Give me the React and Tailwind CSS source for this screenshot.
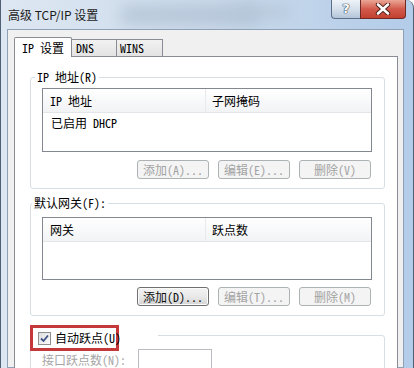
import React from 'react';

const mono = "font-['Noto_Sans_Mono_CJK_SC','Liberation_Mono','Noto_Sans_CJK_SC',monospace] text-[12px] leading-[16px]";

const Btn = ({ children, disabled }) => (
  <div
    className={
      disabled
        ? 'w-[72px] h-[19px] flex items-center justify-center rounded-[3px] border border-[#adb2b5] bg-[#f4f4f4] text-[#a3a3a3]'
        : 'w-[72px] h-[19px] flex items-center justify-center rounded-[3px] border border-[#707070] bg-linear-to-b from-[#f3f3f3] via-[#e9e9e9] to-[#d4d4d4] text-[#111] shadow-[inset_0_0_0_1px_#fbfbfb]'
    }
  >
    {children}
  </div>
);

const ListBox = ({ cols, rows, height }) => (
  <div className={`w-[330px] border border-[#828790] bg-white ${height}`}>
    <div className="flex h-[24px] items-center bg-linear-to-b from-white to-[#f2f3f5] border-b border-[#e3e5e8]">
      <div className="w-[163px] h-full flex items-center pl-[7px] border-r border-[#e8e9eb]">{cols[0]}</div>
      <div className="flex-1 h-full flex items-center pl-[6px]">{cols[1]}</div>
    </div>
    {rows.map((r) => (
      <div key={r} className="h-[20px] flex items-center pl-[8px]">{r}</div>
    ))}
  </div>
);

const Group = ({ label, legendClass, children, className }) => (
  <fieldset className={`ml-[15px] w-[355px] border border-[#d5dfe5] rounded-[3px] px-[11px] ${className}`}>
    <legend className={`px-[2px] ${legendClass}`}>{label}</legend>
    {children}
  </fieldset>
);

export default function App() {
  return (
    <div className="relative w-[414px] h-[368px] overflow-hidden bg-white">
      <div className="relative w-[414px] h-[368px] border-l border-r border-[#4f5f74] rounded-tr-[8px] bg-linear-to-r from-[#dde7f2] via-[#ccdbeb] to-[#b3cce9]">
        <div className="absolute left-[120px] top-[6px] w-[140px] h-[18px] bg-[#a4b6ca] blur-[8px] opacity-60" />
        <div className="absolute left-[230px] top-[4px] w-[60px] h-[16px] bg-[#b7c7d8] blur-[6px] opacity-60" />

        <div className="relative h-[29px] flex items-center pl-[7px] font-['Noto_Sans_CJK_SC',sans-serif] text-[12px] text-[#1b1b1b]">
          高级 TCP/IP 设置
        </div>

        <div className="absolute top-0 left-[330px] flex">
          <div className="w-[29px] h-[19px] flex items-center justify-center border border-t-0 border-r-0 border-[#5d6f88] rounded-bl-[4px] bg-linear-to-b from-[#eef3f8] via-[#d6e0eb] to-[#b4c5d9] font-['DejaVu_Sans',sans-serif] font-bold text-[13px] text-white [text-shadow:0_0_1px_#2c3a4e,0_0_1px_#2c3a4e,0_0_1px_#2c3a4e]">
            ?
          </div>
          <div className="w-[46px] h-[19px] flex items-center justify-center border border-t-0 border-[#6e2b25] rounded-br-[4px] bg-linear-to-b from-[#e9a596] via-[#d25a4c] to-[#c3402f]">
            <svg width="16" height="12" viewBox="0 0 16 12">
              <path d="M3 1.5 L13 10.5 M13 1.5 L3 10.5" stroke="#4a1d18" strokeWidth="4.4" strokeLinecap="round" />
              <path d="M3 1.5 L13 10.5 M13 1.5 L3 10.5" stroke="#ffffff" strokeWidth="2.6" strokeLinecap="round" />
            </svg>
          </div>
        </div>

        <div className={`relative ml-[6px] w-[397px] h-[339px] border border-[#8ea1b7] bg-[#f0f0f0] text-black ${mono}`}>
          <div className="pl-[6px] pt-[7px]">
            <div className="flex items-end h-[19px]">
              <div className="relative z-10 -mb-px w-[58px] h-[20px] flex items-center pl-[7px] bg-white border border-b-0 border-[#898c95] rounded-t-[2px]">
                IP 设置
              </div>
              <div className="w-[45px] h-[17px] flex items-center pl-[4px] border-t border-r border-[#898c95] bg-linear-to-b from-[#f2f2f2] to-[#e3e3e3]">
                DNS
              </div>
              <div className="w-[46px] h-[17px] flex items-center pl-[3px] border-t border-r border-[#898c95] bg-linear-to-b from-[#f2f2f2] to-[#e3e3e3]">
                WINS
              </div>
            </div>

            <div className="w-[384px] h-[320px] bg-white border border-[#898c95]">
              <Group label="IP 地址(R)" legendClass="-ml-[7px]" className="mt-[12px] pb-[9px]">
                <div className="mt-[3px]">
                  <ListBox cols={['IP 地址', '子网掩码']} rows={['已启用 DHCP']} height="h-[64px]" />
                </div>
                <div className="mt-[8px] flex justify-end gap-[9px] pr-[2px]">
                  <Btn disabled>添加(A)...</Btn>
                  <Btn disabled>编辑(E)...</Btn>
                  <Btn disabled>删除(V)</Btn>
                </div>
              </Group>

              <Group label="默认网关(F):" legendClass="-ml-[10px]" className="mt-[6px] pb-[9px]">
                <div className="mt-[6px]">
                  <ListBox cols={['网关', '跃点数']} rows={[]} height="h-[63px]" />
                </div>
                <div className="mt-[7px] flex justify-end gap-[9px] pr-[2px]">
                  <Btn>添加(D)...</Btn>
                  <Btn disabled>编辑(T)...</Btn>
                  <Btn disabled>删除(M)</Btn>
                </div>
              </Group>

              <fieldset className="ml-[15px] mt-[9px] w-[355px] h-[80px] border border-[#d5dfe5] rounded-[3px] px-[11px]">
                <legend className="-ml-[12px] w-[128px]">
                  <div className="-mb-[6px] w-[89px] h-[26px] flex items-center gap-[4px] pl-[5px] border-[3px] border-[#c4383a] whitespace-nowrap">
                    <div className="shrink-0 w-[13px] h-[13px] border border-[#8e8f8f] bg-linear-to-br from-[#dedede] to-[#fbfbfb] flex items-center justify-center">
                      <svg width="9" height="9" viewBox="0 0 9 9">
                        <path d="M1 4.5 L3.5 7 L8 1.5" fill="none" stroke="#3d5285" strokeWidth="1.8" />
                      </svg>
                    </div>
                    <span>自动跃点(U)</span>
                  </div>
                </legend>
                <div className="mt-[4px] flex items-center">
                  <div className="w-[96px] text-[#a6a6a6]">接口跃点数(N):</div>
                  <div className="w-[74px] h-[21px] border border-[#b9bcc1] bg-white" />
                </div>
              </fieldset>
            </div>
          </div>
        </div>
      </div>
    </div>
  );
}
